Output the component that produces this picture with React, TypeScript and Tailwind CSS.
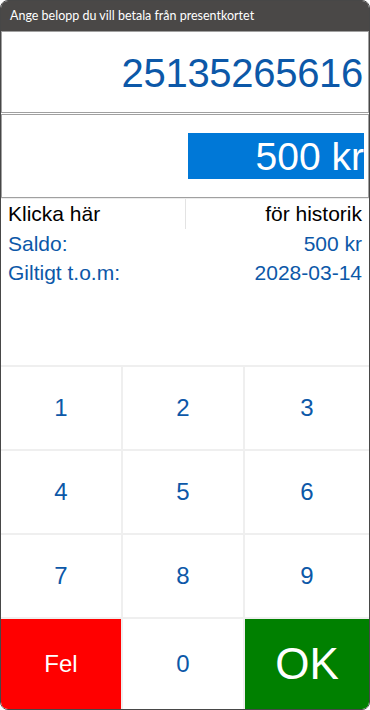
import React from 'react';

const BLUE = 'text-[#0c58a8]';

function Key({ label }: { label: string }) {
  return (
    <button className={`flex items-center justify-center bg-white text-[24px] ${BLUE}`}>
      {label}
    </button>
  );
}

export default function App() {
  return (
    <div className="h-[710px] w-[370px] bg-white">
      <div className="flex h-[710px] w-[370px] flex-col overflow-hidden rounded-[8px] border border-[#474747] bg-white font-['Liberation_Sans',Arial,sans-serif]">
        {/* title bar */}
        <div className="flex h-[30px] shrink-0 items-center bg-[#4a4847] px-[9px] font-['Lato',sans-serif] text-[12.5px] text-white">
          Ange belopp du vill betala från presentkortet
        </div>

        {/* card number */}
        <div className="flex h-[82px] shrink-0 items-center justify-end border border-[#a0a0a0] pr-[5px] pt-[1px]">
          <span className={`text-[40px] leading-none tracking-[-0.3px] ${BLUE}`}>25135265616</span>
        </div>

        {/* amount */}
        <div className="mt-[1px] flex h-[84px] shrink-0 items-center justify-end border border-[#a0a0a0] pr-[4px]">
          <span className="flex h-[46px] w-[176px] items-center justify-end bg-[#0078d7] text-[39px] leading-none text-white">
            500 kr
          </span>
        </div>

        {/* info */}
        <div className="flex h-[31px] shrink-0 border-t border-[#ececec] text-[21px] text-black">
          <div className="flex flex-1 items-center border-r border-[#e3e3e3] pl-[7px]">Klicka här</div>
          <div className="flex flex-1 items-center justify-end pr-[7px]">för historik</div>
        </div>
        <div className={`flex h-[29px] shrink-0 items-center justify-between px-[7px] text-[21px] ${BLUE}`}>
          <span>Saldo:</span>
          <span>500 kr</span>
        </div>
        <div className={`flex h-[29px] shrink-0 items-center justify-between px-[7px] text-[21px] ${BLUE}`}>
          <span>Giltigt t.o.m:</span>
          <span>2028-03-14</span>
        </div>

        <div className="flex-1" />

        {/* keypad */}
        <div className="grid h-[344px] shrink-0 grid-cols-[120px_120px_1fr] grid-rows-[82px_82px_82px_1fr] gap-[2px] bg-[#efefef] pt-[2px]">
          {['1', '2', '3', '4', '5', '6', '7', '8', '9'].map((k) => (
            <Key key={k} label={k} />
          ))}
          <button className="flex items-center justify-center bg-[#ff0000] text-[24px] text-white">Fel</button>
          <Key label="0" />
          <button className="flex items-center justify-center bg-[#008000] text-[44px] text-white">OK</button>
        </div>
      </div>
    </div>
  );
}
